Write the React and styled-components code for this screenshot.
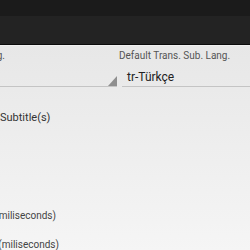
import React from 'react'
import styled, { createGlobalStyle } from 'styled-components'

const GlobalStyle = createGlobalStyle`
    html, body {
        margin: 0;
        padding: 0;
        background: #ebebeb;
        font-family: Roboto, "Liberation Sans", sans-serif;
    }
`

const App = () => {
    return (
        <>
            <GlobalStyle />
            <Page>
                <StatusBar />
                <ActionBar />
                <Content>
                    <SpinnerRow>
                        <Column>
                            <Label>
                                <Clip $width={5}>
                                    <span>Default Sub. Lang.</span>
                                </Clip>
                            </Label>
                            <Spinner>
                                <SpinnerValue />
                                <Arrow viewBox="0 0 9 10">
                                    <polygon points="9,0 9,10 0,10" />
                                </Arrow>
                            </Spinner>
                        </Column>
                        <Column>
                            <Label>Default Trans. Sub. Lang.</Label>
                            <Spinner className="right">
                                <SpinnerValue>tr-Türkçe</SpinnerValue>
                            </Spinner>
                        </Column>
                    </SpinnerRow>

                    <SectionTitle>Subtitle(s)</SectionTitle>

                    <SettingRow className="first">
                        <Clip $width={56}>
                            <span>Subtitle Delay (miliseconds)</span>
                        </Clip>
                    </SettingRow>
                    <SettingRow>
                        <Clip $width={59}>
                            <span>Sync Offset (miliseconds)</span>
                        </Clip>
                    </SettingRow>
                </Content>
            </Page>
        </>
    )
}

export default App


const Page = styled.div`
    width: 250px;
    height: 250px;
    overflow: hidden;
    display: flex;
    flex-direction: column;
`

const StatusBar = styled.div`
    height: 16px;
    background-color: #1b1b1b;
    flex-shrink: 0;
`

const ActionBar = styled.div`
    height: 28px;
    background-color: #232323;
    border-bottom: 1px solid #0b0b0b;
    flex-shrink: 0;
`

const Content = styled.main`
    flex: 1;
    background: linear-gradient(to bottom, #e7e7e7 0%, #ececec 35%, #f5f5f5 100%);
    border-top: 1px solid #f0f0f0;
    padding-top: 4px;
`

const SpinnerRow = styled.section`
    display: grid;
    grid-template-columns: 117px 1fr;
    column-gap: 2px;
`

const Column = styled.div`
    display: flex;
    flex-direction: column;
    min-width: 0;
`

const Label = styled.div`
    font-size: 10px;
    line-height: 12px;
    color: #555;
    white-space: nowrap;
    height: 12px;
`

const Clip = styled.div`
    width: ${p => p.$width}px;
    overflow: hidden;
    display: flex;
    justify-content: flex-end;
    white-space: nowrap;

    span{
        flex-shrink: 0;
    }
`

const Spinner = styled.div`
    position: relative;
    margin-top: 3px;
    border-bottom: 1px solid #c4c4c4;
    padding-top: 5px;
    box-sizing: border-box;
    height: 22px;

    &.right{
        margin-left: 3px;
        padding-left: 5px;
    }
`

const SpinnerValue = styled.div`
    font-size: 12px;
    line-height: 14px;
    color: #222;
`

const Arrow = styled.svg`
    position: absolute;
    right: 0;
    bottom: 0;
    width: 9px;
    height: 10px;
    fill: #8f8f8f;
`

const SectionTitle = styled.h3`
    margin: 24px 0 0;
    font-size: 11px;
    line-height: 14px;
    font-weight: 400;
    color: #333;
`

const SettingRow = styled.div`
    font-size: 10px;
    line-height: 12px;
    color: #444;
    margin-top: 17px;

    &.first{
        margin-top: 85px;
    }
`
